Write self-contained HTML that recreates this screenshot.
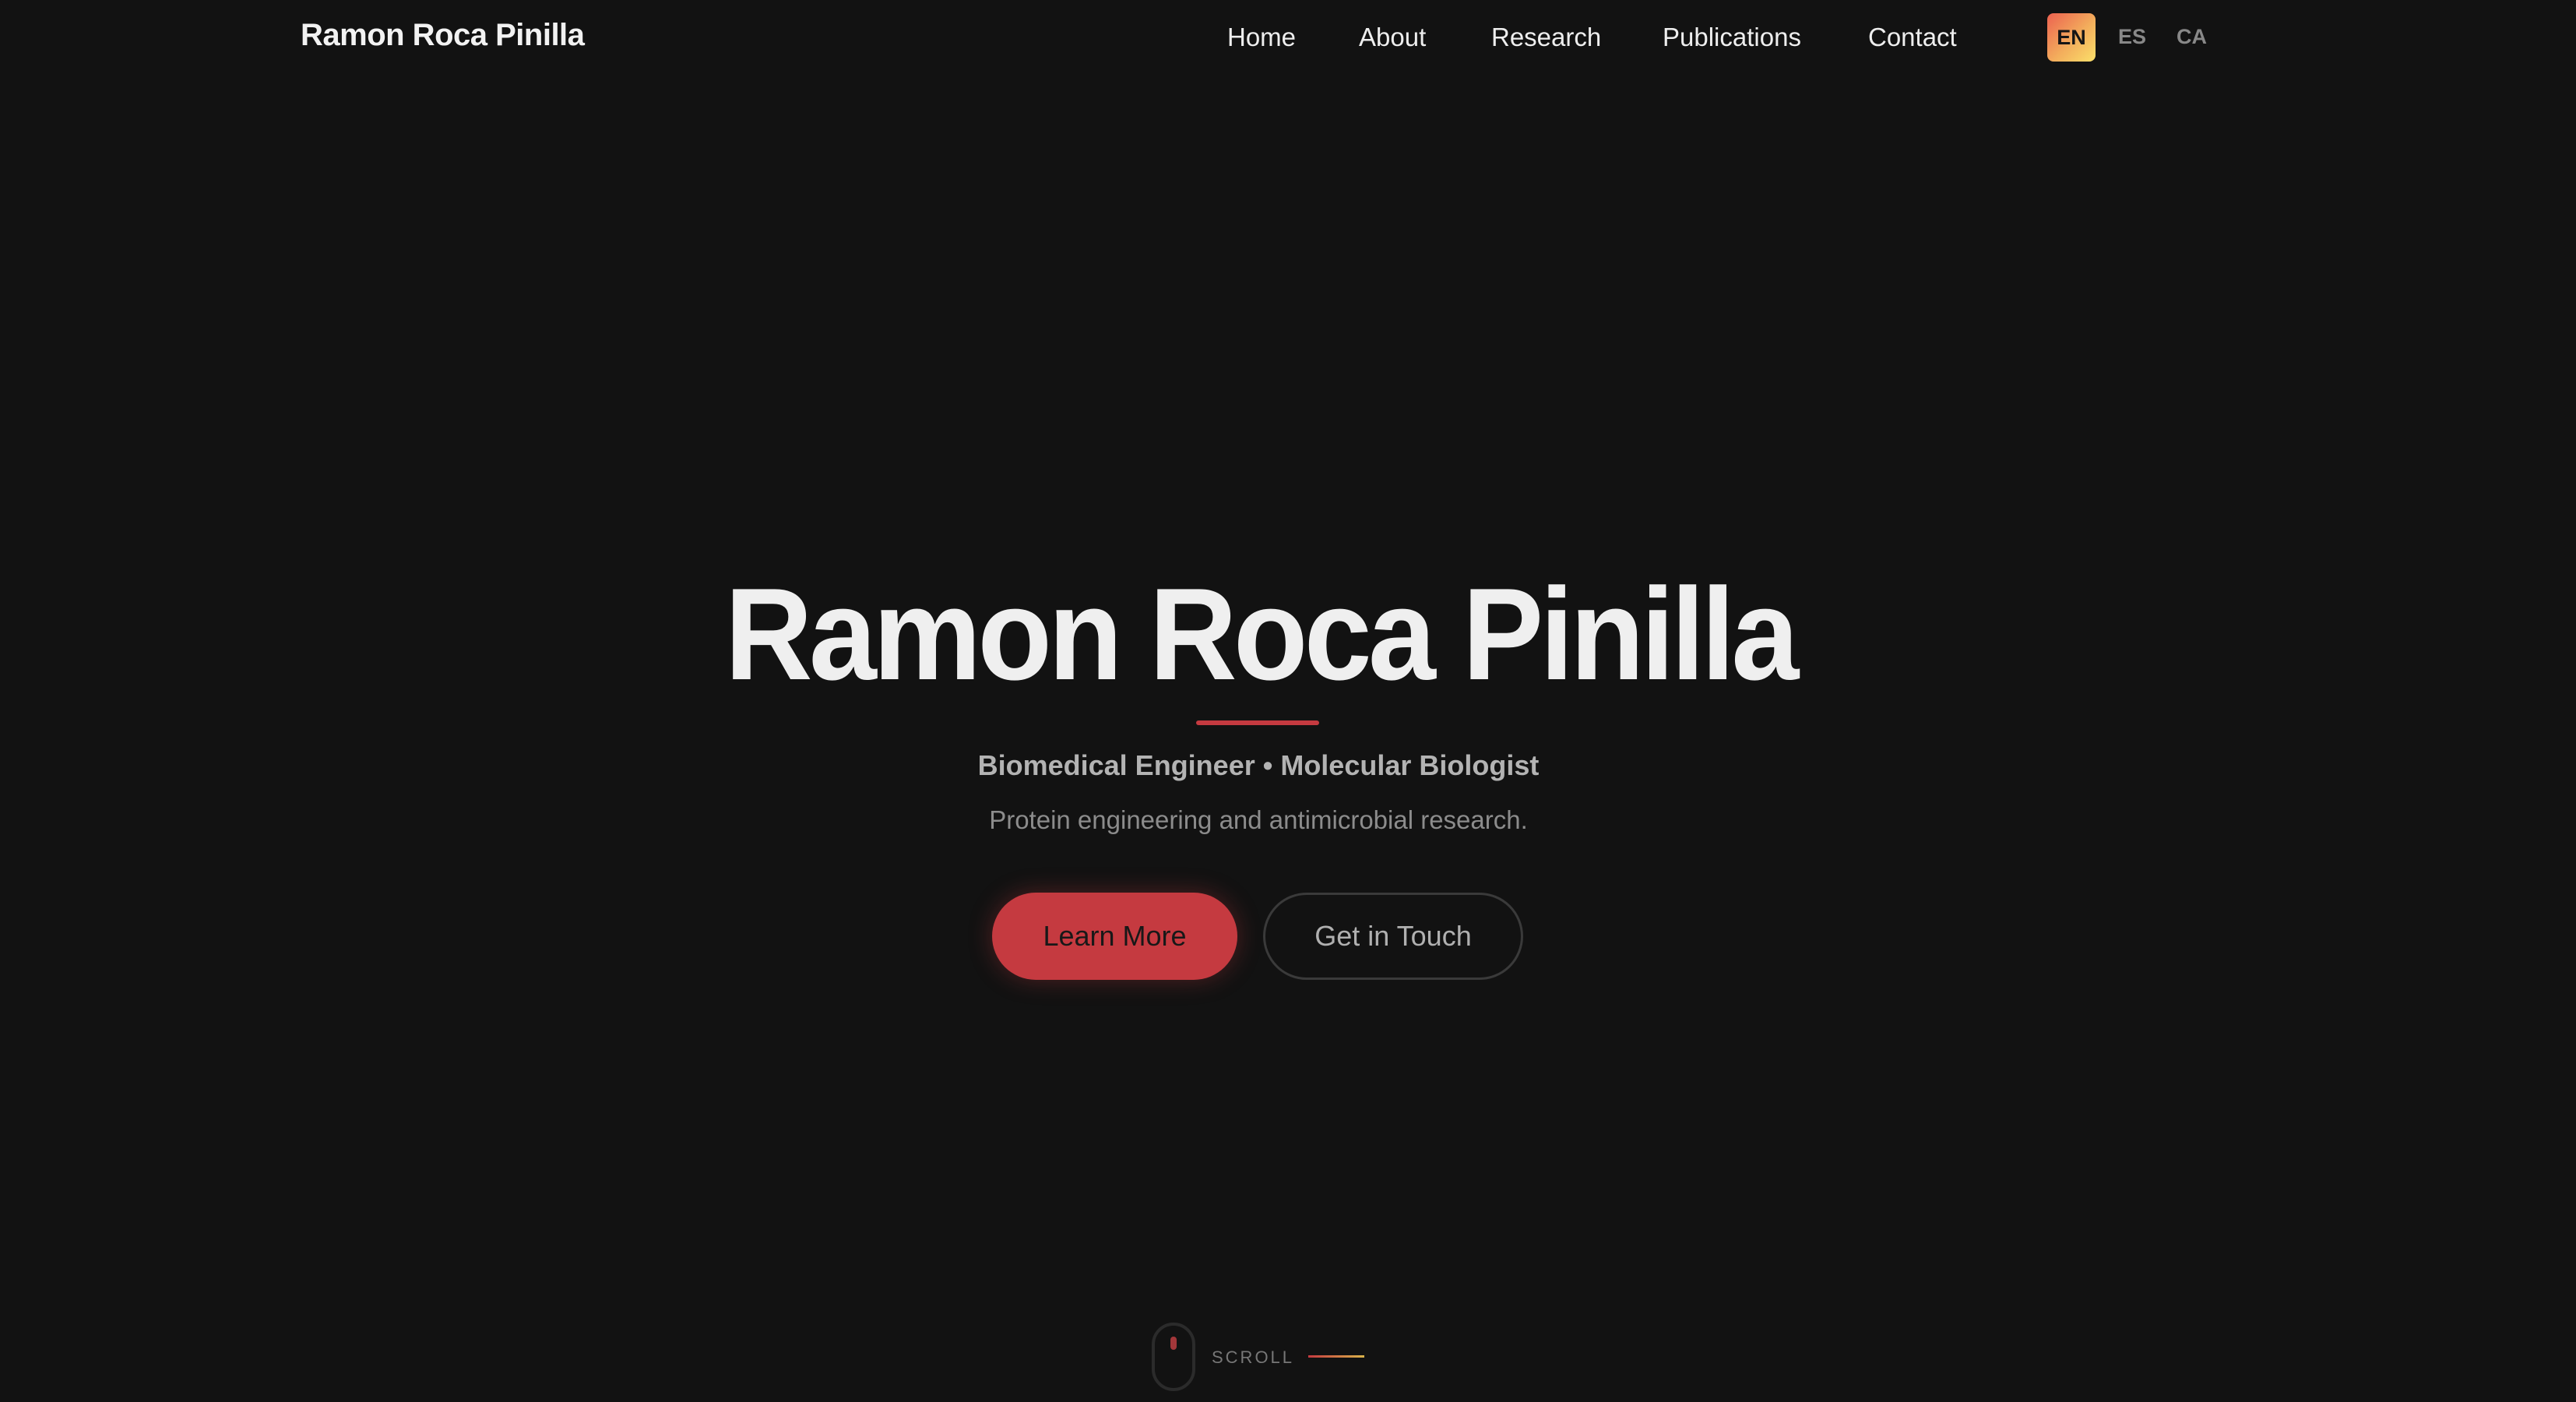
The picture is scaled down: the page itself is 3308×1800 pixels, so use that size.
<!DOCTYPE html>
<html><head><meta charset="utf-8"><style>
*{margin:0;padding:0;box-sizing:border-box}
html,body{width:3308px;height:1800px;background:#121212;overflow:hidden;font-family:"Liberation Sans",sans-serif;position:relative}
.a{position:absolute;white-space:nowrap}
.logo{left:386px;top:23px;font-size:40px;font-weight:bold;color:#f2f2f2;letter-spacing:-0.5px}
.nav{top:29px;font-size:33px;color:#eee}
.en{left:2629px;top:17px;width:62px;height:62px;border-radius:8px;background:linear-gradient(135deg,#ec6150,#f3ad5c 55%,#fbe06a);color:#161616;font-weight:bold;font-size:27px;line-height:62px;text-align:center}
.lg{top:32px;font-size:27px;font-weight:bold;color:#888}
.c{left:0;width:3232px;text-align:center}
.title{top:718px;font-size:168px;font-weight:bold;color:#efefef}
.title span{display:inline-block;transform:scaleX(0.93);letter-spacing:-5px;margin-right:-5px}
.line{left:1536px;top:925px;width:158px;height:6px;background:#c53a40;border-radius:3px}
.sub{top:962px;font-size:36px;font-weight:bold;color:#b3b3b3}
.tag{top:1034px;font-size:33px;color:#8c8c8c}
.b1{left:1274px;top:1146px;width:315px;height:112px;border-radius:56px;background:#c53a40;color:#181818;font-size:36px;line-height:112px;text-align:center;box-shadow:0 0 30px rgba(197,58,64,.35)}
.b2{left:1622px;top:1146px;width:334px;height:112px;border-radius:56px;border:3px solid #3a3a3a;color:#b0b0b0;font-size:36px;line-height:106px;text-align:center}
.mouse{left:1479px;top:1698px;width:56px;height:88px;border-radius:28px;border:4px solid #2b2b2b}
.mouse i{position:absolute;left:20px;top:14px;width:8px;height:17px;border-radius:4px;background:#a3373a}
.sc{left:1556px;top:1730px;font-size:22px;letter-spacing:3px;color:#777}
.sl{left:1680px;top:1740px;width:72px;height:3px;background:linear-gradient(90deg,#c53a40,#d9b34a)}
</style></head><body>
<div class="a logo">Ramon Roca Pinilla</div>
<div class="a nav" style="left:1576px">Home</div>
<div class="a nav" style="left:1745px">About</div>
<div class="a nav" style="left:1915px">Research</div>
<div class="a nav" style="left:2135px">Publications</div>
<div class="a nav" style="left:2399px">Contact</div>
<div class="a en">EN</div>
<div class="a lg" style="left:2720px">ES</div>
<div class="a lg" style="left:2795px">CA</div>
<div class="a c title"><span>Ramon Roca Pinilla</span></div>
<div class="a line"></div>
<div class="a c sub">Biomedical Engineer • Molecular Biologist</div>
<div class="a c tag">Protein engineering and antimicrobial research.</div>
<div class="a b1">Learn More</div>
<div class="a b2">Get in Touch</div>
<div class="a mouse"><i></i></div>
<div class="a sc">SCROLL</div>
<div class="a sl"></div>
</body></html>
